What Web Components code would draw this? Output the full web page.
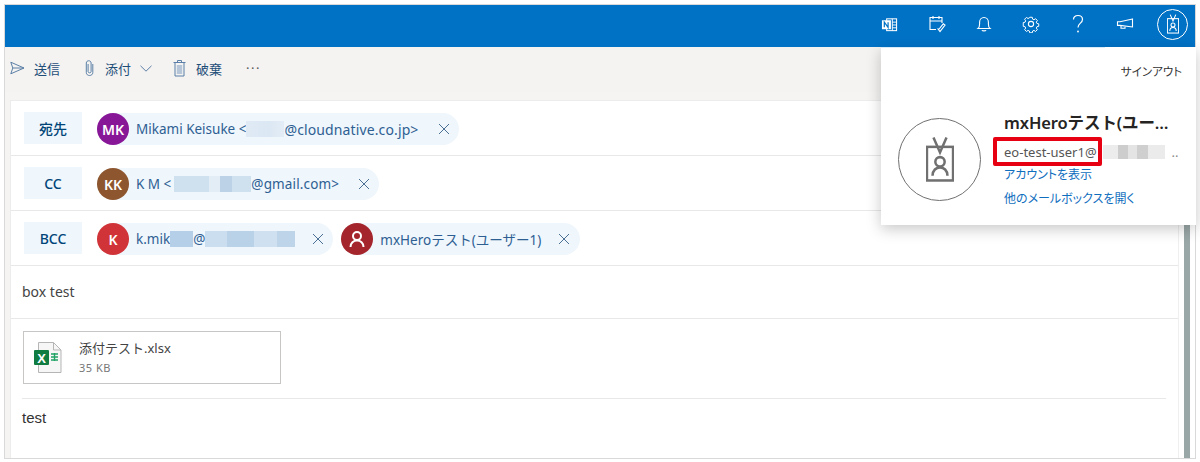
<!DOCTYPE html>
<html lang="ja"><head><meta charset="utf-8"><title>Compose</title>
<style>
html,body{margin:0;padding:0;background:#fff}
body{width:1200px;height:462px;overflow:hidden;font-family:"Noto Sans","Noto Sans CJK JP",sans-serif;}
</style></head><body>
<owa-app>
  <owa-header slot="header"></owa-header>
  <owa-toolbar slot="toolbar"></owa-toolbar>
  <owa-row slot="main" label="宛先">
    <owa-chip initials="MK" color="#881798" close="25"><span>Mikami Keisuke &lt;</span><owa-blur w="38" pattern="a"></owa-blur><span style="font-size:14px;letter-spacing:.12px">@cloudnative.co.jp&gt;</span></owa-chip>
  </owa-row>
  <owa-row slot="main" label="CC">
    <owa-chip initials="KK" color="#8e562e" close="25"><span>K M &lt;</span><owa-blur w="77" pattern="b" style="margin-left:3px"></owa-blur><span style="letter-spacing:.15px">@gmail.com&gt;</span></owa-chip>
  </owa-row>
  <owa-row slot="main" label="BCC">
    <owa-chip initials="K" color="#d13438" close="23"><span>k.mik</span><owa-blur w="23" pattern="c"></owa-blur><span>@</span><owa-blur w="90" pattern="d"></owa-blur></owa-chip>
    <owa-chip person color="#a4262c" close="23" end="10"><span>mxHeroテスト(ユーザー1)</span></owa-chip>
  </owa-row>
  <owa-subject slot="main">box test</owa-subject>
  <owa-attachment slot="main" name="添付テスト.xlsx" size="35 KB"></owa-attachment>
  <owa-body slot="main">test</owa-body>
  <owa-account slot="panel"></owa-account>
</owa-app>
<script>
const def=(name,html,init)=>customElements.define(name,class extends HTMLElement{
  constructor(){super();this.attachShadow({mode:'open'}).innerHTML=typeof html==='function'?html(this):html;}
  connectedCallback(){if(init)init(this,this.shadowRoot);}
});
const svg=(w,h,vb,body,st='')=>`<svg width="${w}" height="${h}" viewBox="${vb}" fill="none" stroke="currentColor" stroke-width="1" style="display:block;${st}">${body}</svg>`;

def('owa-app',`<style>
:host{display:block;position:relative;box-sizing:border-box;width:1192px;height:455px;margin:4px 4px 0;border:1px solid #d9d9d9;display:flex;flex-direction:column;background:#fff}
.main{flex:1;display:flex;min-height:0;background:#f5f4f3}
.card{width:1168px;margin:8px 0 0 5px;background:#fff;display:flex;flex-direction:column;border-left:1px solid #ececec;border-top:1px solid #ececec;box-sizing:border-box;height:358px}
.track{flex:1;background:#fff;display:flex;justify-content:flex-end;padding-right:5px;border-left:1px solid #efefef}
.thumb{width:6px;background:#9aa7a7}
</style><slot name="header"></slot><slot name="toolbar"></slot>
<div class="main"><div class="card"><slot name="main"></slot></div><div class="track"><div class="thumb"></div></div></div>
<slot name="panel"></slot>`);

const hIcons=[
 svg(17,17,'0 0 18 18',`<rect x="6" y="3" width="10.500" height="12.500" stroke-width="1.100"/><path d="M12 3v12.500M12 6.500h4.500M12 9.500h4.500M12 12.500h4.500" stroke-width="1"/><rect x="1" y="4.500" width="9.500" height="9.500" fill="#fff" stroke="none"/><path d="M3.500 12V6.500l4 5.500V6.500" stroke="#0072c6" stroke-width="1.300"/>`),
 svg(20,20,'0 0 20 20',`<path d="M9 15.500H3V3.500h12v5.500M3 7h12M6 2v3M12 2v3" stroke-width="1.100"/><path d="M11 14.500l2 2.500 5-6.500-1.700-1.200-4.200 5.200z" stroke-width="1.100" transform="translate(0 .5)"/>`),
 svg(16,18,'0 0 16 18',`<path d="M2 13.500c1.300-1 1.600-2.500 1.600-4.500V7.200C3.600 4.500 5.500 2.500 8 2.500s4.400 2 4.400 4.700V9c0 2 .3 3.500 1.600 4.500z" stroke-width="1.100"/><path d="M6 15.200c.5 1 3.500 1 4 0" stroke-width="1.300"/>`),
 svg(18,18,'0 0 18 18',`<circle cx="9" cy="9" r="2.600" stroke-width="1.100"/><path d="M7.600 1.500h2.800l.4 2.100 1.500.7 1.800-1.200 2 2-1.200 1.800.7 1.500 2 .4v2.800l-2 .4-.7 1.500 1.200 1.800-2 2-1.800-1.200-1.500.7-.4 2H7.600l-.4-2-1.500-.7-1.800 1.200-2-2 1.200-1.800-.7-1.500-2-.4V7.400l2-.4.7-1.500L1.900 3.700l2-2 1.800 1.200 1.500-.7z" transform="translate(.9 .9) scale(.9)" stroke-width="1.100"/>`),
 svg(12,20,'0 0 12 20',`<path d="M1.500 5.500C1.500 3 3.400 1.500 6 1.500s4.500 1.700 4.500 4c0 3.700-4.500 3.600-4.500 8" stroke-width="1.200"/><circle cx="6" cy="17.500" r=".9" fill="currentColor" stroke="none"/>`),
 svg(18,12,'0 0 18 12',`<path d="M16.500 1L4 3.800H1.500v3.600H4L16.500 9z" stroke-width="1.100"/><path d="M5 7.800v2.400h4V8.700" stroke-width="1.100"/>`)
];
const badge=(s,c,sw)=>`<svg width="${s}" height="${s*46/28}" viewBox="-1 -1 30 48" fill="none" stroke="${c}" stroke-width="${sw}" style="display:block"><path d="M7 0l7 16 7-16"/><rect x="0" y="10" width="28" height="36"/><circle cx="14" cy="26" r="5"/><path d="M6 41c0-6 4-9 8-9s8 3 8 9"/></svg>`;
def('owa-header',`<style>
:host{display:flex;height:42px;box-sizing:border-box;padding-bottom:4px;background:#0072c6;color:#fff;align-items:center;justify-content:flex-end;flex:none}
.i{width:47px;height:38px;display:flex;align-items:center;justify-content:center}
.me{width:31px;height:31px;border:1px solid #fff;border-radius:50%;display:flex;align-items:center;justify-content:center;margin:0 7px 0 9px;box-sizing:border-box}
</style>${hIcons.map(i=>`<div class="i">${i}</div>`).join('')}<div class="me">${badge(12,'#fff',2.600)}</div>`);

def('owa-toolbar',`<style>
:host{display:flex;height:45px;background:#f4f3f2;align-items:center;flex:none;color:#1f4e79;font-size:13px;padding:0 0 3px 5px;box-sizing:border-box;--ic:#5b7fa6}
span{white-space:nowrap}
svg{color:var(--ic)}
</style>
${svg(15,14,'0 0 15 14','<path d="M.8 1.200L14 7 .8 12.800 2.800 7zM2.800 7H14" stroke-width="1"/>')}
<span style="margin-left:9px">送信</span>
${svg(9,18,'0 0 9 18','<path d="M7.800 5v8.500c0 4-6.500 4-6.500 0V4c0-3 4.800-3 4.800 0v8.500c0 1.800-3 1.800-3 0V5" stroke-width="1"/>','margin-left:25px')}
<span style="margin-left:11px">添付</span>
${svg(12,7,'0 0 12 7','<path d="M.5 .8L6 6.200 11.500 .8" stroke-width="1"/>','margin-left:9px')}
${svg(13,18,'0 0 13 18','<path d="M.5 3.500h12M4.500 3.500V1.500h4v2M2 3.500v13.500h9V3.500" stroke-width="1"/><rect x="3.800" y="6" width="5.400" height="9" fill="#b6c6d8" stroke="none"/>','margin-left:21px')}
<span style="margin-left:10px">破棄</span>
<span style="margin-left:24px;letter-spacing:1.500px;color:#555">···</span>`);

def('owa-row',t=>`<style>
:host{display:flex;height:55px;box-sizing:border-box;border-bottom:1px solid #e8e8e8;align-items:center;padding-left:13px;gap:8px}
.l{width:58px;height:32px;background:#eff6fc;color:#004578;font:500 14px "Noto Sans","Noto Sans CJK JP",sans-serif;display:flex;align-items:center;justify-content:center;margin-right:7px;flex:none}
</style><div class="l">${t.getAttribute('label')}</div><slot></slot>`);

def('owa-chip',t=>`<style>
:host{display:inline-flex;height:32px;margin-top:2px;border-radius:16px;background:#eff6fc;align-items:center;color:#2e5f93;font-size:13.500px;white-space:nowrap;flex:none}
.a{width:32px;height:32px;border-radius:50%;background:${t.getAttribute('color')};color:#fff;font-weight:600;font-size:14px;display:flex;align-items:center;justify-content:center;flex:none;margin-right:7px}
.x{width:12px;height:12px;margin-left:${t.getAttribute('close')-6}px;margin-right:${t.getAttribute('end')||9}px;color:#4c6f94;flex:none}
.c{display:flex;align-items:center}
</style><div class="a">${t.hasAttribute('person')?svg(16,18,'0 0 16 18','<circle cx="8" cy="6" r="4" stroke-width="2"/><path d="M1.500 17c0-4 3-6.500 6.500-6.500s6.500 2.500 6.500 6.500" stroke-width="2"/>'):t.getAttribute('initials')}</div>
<div class="c"><slot></slot></div><div class="x">${svg(12,12,'0 0 12 12','<path d="M1 1l10 10M11 1L1 11" stroke-width="1"/>')}</div>`);

const pats={a:'linear-gradient(90deg,#dfeaf5,#dbe7f3 60%,#e4edf6)',
 b:'linear-gradient(90deg,#cfe0ef 0 45%,#e2edf6 45% 60%,#bcd3e7 60% 75%,#cfe0ef 75%)',
 c:'linear-gradient(90deg,#b4cfe7,#b4cfe7)',
 d:'linear-gradient(90deg,#cadef0 0 25%,#b9d2e8 25% 55%,#cfe0f0 55% 80%,#bdd4e9 80%)',
 e:'linear-gradient(90deg,#ececec 0 25%,#cdcdcd 25% 40%,#e4e4e4 40% 55%,#cfcfcf 55% 72%,#ebebeb 72%)'};
def('owa-blur',t=>`<style>:host{display:inline-block;width:${t.getAttribute('w')}px;height:${t.getAttribute('h')||16}px;background:${pats[t.getAttribute('pattern')]};filter:blur(.6px);flex:none}</style>`);

def('owa-subject',`<style>:host{display:flex;height:53px;box-sizing:border-box;padding-bottom:2px;border-bottom:1px solid #e8e8e8;align-items:center;padding-left:11px;font-size:14px;color:#444}</style><slot></slot>`);

def('owa-attachment',t=>`<style>
:host{display:block;height:80px;box-sizing:border-box;padding:12px 0 0 12px;position:relative}
:host::after{content:"";display:block;position:absolute;left:11px;right:12px;bottom:0;border-bottom:1px solid #e8e8e8}
.b{width:258px;height:53px;box-sizing:border-box;border:1px solid #c8c6c4;display:flex;align-items:center;padding-left:10px}
.t{margin-left:17px;display:flex;flex-direction:column;gap:4px;margin-top:-2px}
.n{font-size:13px;color:#444;line-height:18px}.s{font-size:11px;letter-spacing:.5px;color:#777;line-height:14px}
</style><div class="b"><svg width="28" height="31" viewBox="0 0 28 31" style="display:block;flex:none">
<path d="M4.500 .5h15l7.500 7.500v22.500H4.500z" fill="#f6f6f6" stroke="#b5b5b5"/><path d="M19.500 .5V8H27" fill="none" stroke="#b5b5b5"/>
<rect x="0" y="8" width="15" height="15" rx="1" fill="#107c41"/><text x="7.500" y="20.500" text-anchor="middle" fill="#fff" font-family="Liberation Sans" font-weight="700" font-size="13">X</text>
<path d="M17 12h7M17 15h7M17 18h7M20.500 11v8" stroke="#21a366" stroke-width="1.400"/></svg>
<div class="t"><div class="n">${t.getAttribute('name')}</div><div class="s">${t.getAttribute('size')}</div></div></div>`);

def('owa-body',`<style>:host{display:block;padding:10px 0 0 11px;font:15px "Liberation Sans",sans-serif;color:#333}</style><slot></slot>`);

def('owa-account',`<style>
:host{position:absolute;left:876px;top:42px;width:315px;height:178px;background:#fff;box-shadow:0 4px 14px rgba(0,0,0,.22);display:block;font-size:12px;color:#333;box-sizing:border-box;padding:16px 14px 0 0}
:host::before{content:"";position:absolute;left:0;top:0;width:224px;height:1px;background:#d8ebf8}
.so{text-align:right;color:#333;line-height:17px;height:17px;font-size:11.500px;font-feature-settings:"palt"}
.m{display:flex;margin-top:36px;padding-left:17px}
.av{width:83px;height:83px;box-sizing:border-box;border:1.500px solid #707070;border-radius:50%;display:flex;align-items:center;justify-content:center;flex:none;margin-top:2px;padding-bottom:1px}
.i{margin-left:23px;width:178px;position:relative}
.nm{font-size:16.500px;font-weight:600;line-height:22px;color:#252423;white-space:nowrap;margin-top:-4px;letter-spacing:-.1px}
.em{display:flex;align-items:center;height:18px;margin-top:9px;color:#555;font-size:13px;white-space:nowrap}
.lk{color:#106ebe;line-height:18px;display:block;white-space:nowrap;font-size:12px;font-feature-settings:"palt"}
.red{position:absolute;left:-11px;top:21px;width:109px;height:29px;box-sizing:border-box;border:4px solid #e60012;border-radius:2px}
</style><div class="so">サインアウト</div>
<div class="m"><div class="av">${badge(28,'#707070',2.700)}</div>
<div class="i"><div class="nm">mxHeroテスト(ユー…</div>
<div class="em"><span>eo-test-user1@</span><owa-blur w="62" h="14" pattern="e" style="margin-left:6px"></owa-blur><span style="margin-left:7px;color:#888">..</span></div>
<div class="lk" style="margin-top:5px">アカウントを表示</div><div class="lk" style="margin-top:6px">他のメールボックスを開く</div>
<div class="red"></div></div></div>`);
</script>
</body></html>
